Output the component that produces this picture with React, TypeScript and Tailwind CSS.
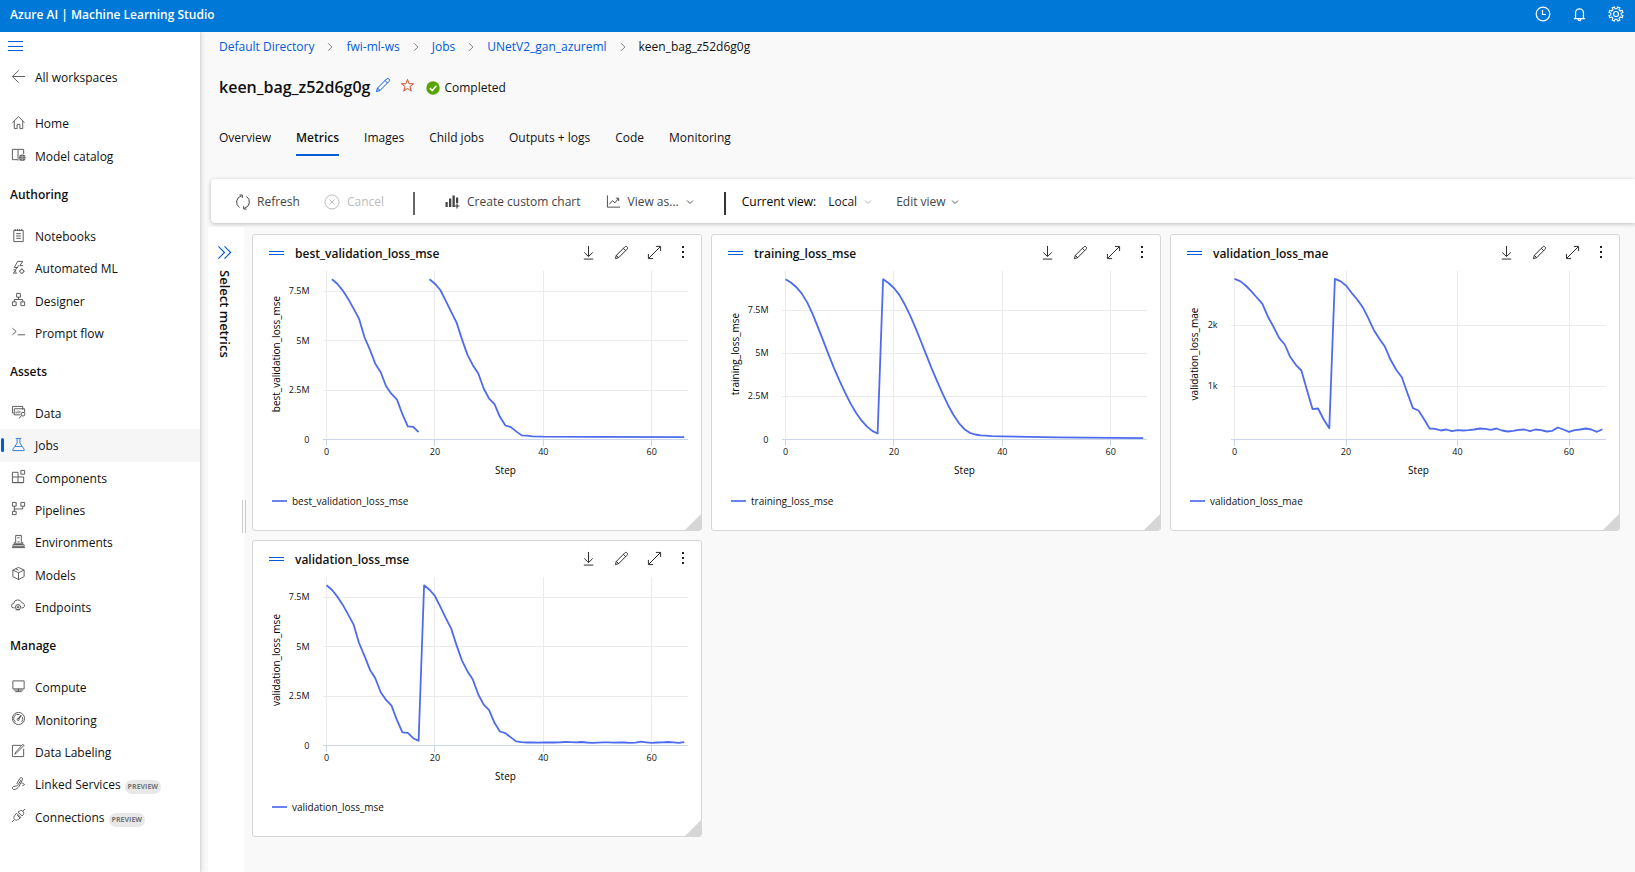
import { Fragment, type ReactNode } from "react";

/* ---------- Icons ---------- */

function Icon({ children, className = "size-4" }: { children: ReactNode; className?: string }) {
  return (
    <svg
      viewBox="0 0 16 16"
      fill="none"
      stroke="currentColor"
      strokeWidth="1"
      aria-hidden="true"
      className={`shrink-0 ${className}`}
    >
      {children}
    </svg>
  );
}

const icons: Record<string, ReactNode> = {
  back: <path d="M15 8H1.5M8 1.5 1.5 8 8 14.5" />,
  home: <path d="M1.5 8.2 8 1.8l6.5 6.4M3.5 6.5v8h3v-4.500h3v4.500h3v-8" />,
  catalog: (
    <>
      <path d="M7.500 14.500v-12H1.500v11h5.500M7.500 2.500h6v5" />
      <circle cx="12" cy="11.500" r="3.500" fill="currentColor" stroke="none" />
      <path d="M8.500 10.500h7M8.500 12.600h7M12 8v7" stroke="#fff" strokeWidth=".5" />
    </>
  ),
  notebook: (
    <>
      <path d="M3 2.500h10v12H3zM5.500 6h5M5.500 8.500h5M5.500 11h5" />
      <path d="M4.500 1v2M7 1v2M9 1v2M11.500 1v2" />
    </>
  ),
  automl: (
    <>
      <path d="M7 1.500h5.500L9.500 6H13M7 1.500 3.500 8h3.800M8.500 5.500 5 10" />
      <path d="M2.500 10.500h3l-3 3.500h4M3.500 12l2 1" />
      <circle cx="11.500" cy="12" r="2" />
      <path d="M11.500 9v1M11.500 14v1M8.500 12h1M13.500 12h1" />
    </>
  ),
  designer: (
    <path d="M6 1.500h4v4H6zM1.500 10.500h4v4h-4zM10.500 10.500h4v4h-4zM8 5.500V8M3.500 10.500V8h9v2.500" />
  ),
  prompt: <path d="M1.500 4.500 5.500 8l-4 3.500M7 11.500h8" />,
  data: (
    <>
      <path d="M12.500 5V1.500h-11v7H3M3.500 4h11v4M3.500 4v6.500H10M5.500 9V7M7.500 9V6M9.500 8.500V6.500" />
      <circle cx="12.800" cy="9.800" r="2" />
      <path d="m11.300 11.300-3 3.200" />
    </>
  ),
  jobs: <path d="M5 1.500h6M6.500 1.500v5L2 13v1.500h12V13L9.500 6.500v-5M4.300 10h7.400" />,
  components: (
    <path d="M1.500 3.500h6v11h-6zM1.500 8.500h12v6h-12M7.500 14.500h6M10.500 1.500h4v4h-4z" />
  ),
  pipelines: (
    <path d="M1.500 1.500h4v4h-4zM10.500 1.500h4v4h-4zM1.500 11h4v3.500h-4zM3.500 5.500V11M3.500 8.500h9v-3" />
  ),
  environments: (
    <path d="M5 1.500h6v9H5zM6.800 4h2.400M6.800 8.500h2.400M3.500 8.500v2.800h9V8.500M2 11.500h12v2H2zM1 14.500h14" />
  ),
  models: <path d="M8 1.500 14 4.300v7L8 14.500l-6-3.200v-7zM2 4.300l6 2.900 6-2.900M8 7.200v7.300M5 2.900l3 1.600" />,
  endpoints: (
    <>
      <path d="M4 10.500H2.800a2.300 2.300 0 0 1 0-4.600A4.500 4.500 0 0 1 11.500 5a3 3 0 0 1 1.500 5.500" />
      <circle cx="7.500" cy="9.800" r="2.800" />
      <path d="M5 12.500h4.500M7.500 8v3M6 9.800h3M13 10.500h-2" />
    </>
  ),
  compute: <path d="M2 2h12v8.500H2zM8 10.500V13M4.500 13.500h7M3 11.800h10" />,
  monitoring: (
    <>
      <circle cx="8" cy="8" r="6.500" />
      <path d="M4.500 11.500A4.500 4.500 0 0 1 9 3.800M12 6.500a4.600 4.600 0 0 1-.5 5" />
      <path d="M11 4.500 7.800 8.500" strokeWidth="1.500" />
      <circle cx="7.600" cy="9" r="1.100" />
    </>
  ),
  labeling: <path d="M13.500 6v8.500h-12v-12h9.500M14 2.500l-8 8-2 1.500 1.200-2.500L12.500 1.500z" />,
  linked: (
    <path d="M6 8.500 9.500 2.500c1-1.500 3.500-.5 2.800 1.300L8.500 11c-1 1.800-3.200 3.500-5.300 3.500-2.200 0-2.400-3 0-3.500 2-.5 3.300.3 4.300-1.500L10.800 4M11 7.500c1.500-.5 2.500 1 3.500 1.500M12 10.500l2.500-1.500" />
  ),
  connections: (
    <path d="m1 15 2.500-2.500M15 1l-2.500 2.500M6 5.500 3.800 8.200c-1 1.200-1 3 0 4s2.800 1 4 0L10.500 10zM7.500 4.200 10 2.800c1.200-.5 2.400.2 2.900.9s1 2 .3 3.100L11.800 8.500zM6.500 7.500l3 3" />
  ),
  pencil: (
    <path d="M1.500 14.500 2.500 11 11.500 2c.8-.8 1.800-.6 2.400 0s.8 1.600 0 2.500L5 13.500zM10 3.500 12.500 6M2.500 11 5 13.500" />
  ),
  star: <path d="m8 1.500 1.700 4.600h4.800l-3.900 3 1.500 4.900L8 11.100 3.900 14l1.500-4.900-3.900-3h4.800z" />,
  refresh: (
    <>
      <path d="M6.500 1.800A6.500 6.500 0 0 0 4.500 13.500M9.500 14.200A6.500 6.500 0 0 0 11.500 2.500" />
      <path d="M4.500 1h2.800v2.800M11.500 15H8.700v-2.800" />
    </>
  ),
  cancel: (
    <>
      <circle cx="8" cy="8" r="7" />
      <path d="m5.500 5.500 5 5M10.500 5.500l-5 5" />
    </>
  ),
  customChart: (
    <>
      <path
        d="M1.500 8h2.200v5H1.500zM5 4.500h2.300V13H5zM8.500 1.500h2.300V13H8.500zM12 3.500h2.200V9H12z"
        fill="currentColor"
        stroke="none"
      />
      <path d="M13 9.500v5M10.500 12h5" strokeWidth="1.200" />
    </>
  ),
  lineChart: <path d="M1.500 1.500v12.500H15M3.500 11l3.500-4 2.500 2.500L13.500 4.500M10.500 4.500h3v3" />,
  download: <path d="M8 1v11M3.500 8 8 12.300 12.500 8M3 15h10" />,
  expand: <path d="m2 14 12-12M9.500 1.500h5v5M1.500 9.500v5h5" />,
  chevronRight: <path d="m5 2 6 6-6 6" strokeWidth="1.500" />,
  chevronDown: <path d="m2 5 6 6 6-6" strokeWidth="1.800" />,
  doubleChevron: <path d="m1.500 1.500 6.500 6.500-6.500 6.500M8 1.500 14.500 8 8 14.500" strokeWidth="1.200" />,
  clock: (
    <>
      <circle cx="8" cy="8" r="6.800" strokeWidth="1.200" />
      <path d="M7.500 4v4.500h3.500" strokeWidth="1.200" />
    </>
  ),
  bell: (
    <path
      d="M2 12.500h12M3.800 12.500V6.200a4.200 4.200 0 0 1 8.400 0v6.300M6.500 13a1.500 1.500 0 0 0 3 0"
      strokeWidth="1.300"
    />
  ),
  gear: (
    <>
      <circle cx="8" cy="8" r="2.500" strokeWidth="1.200" />
      <path
        d="M6.400 1 7.100 2.800h1.800L9.600 1l2.200.9-.8 1.800L12.300 5l1.800-.8.9 2.200-1.800.7v1.800l1.800.7-.9 2.200-1.800-.8-1.300 1.300.8 1.800-2.200.9-.7-1.800H7.100L6.400 15l-2.200-.9.8-1.800L3.700 11l-1.800.8L1 9.600l1.800-.7V7.100L1 6.400l.9-2.200 1.800.8L5 3.700l-.8-1.800z"
        strokeWidth="1.100"
      />
    </>
  ),
};

/* ---------- Sidebar ---------- */

type NavItem = { label: string; icon: string; active?: boolean; preview?: boolean };

const topItems: NavItem[] = [
  { label: "Home", icon: "home" },
  { label: "Model catalog", icon: "catalog" },
];
const authoring: NavItem[] = [
  { label: "Notebooks", icon: "notebook" },
  { label: "Automated ML", icon: "automl" },
  { label: "Designer", icon: "designer" },
  { label: "Prompt flow", icon: "prompt" },
];
const assets: NavItem[] = [
  { label: "Data", icon: "data" },
  { label: "Jobs", icon: "jobs", active: true },
  { label: "Components", icon: "components" },
  { label: "Pipelines", icon: "pipelines" },
  { label: "Environments", icon: "environments" },
  { label: "Models", icon: "models" },
  { label: "Endpoints", icon: "endpoints" },
];
const manage: NavItem[] = [
  { label: "Compute", icon: "compute" },
  { label: "Monitoring", icon: "monitoring" },
  { label: "Data Labeling", icon: "labeling" },
  { label: "Linked Services", icon: "linked", preview: true },
  { label: "Connections", icon: "connections", preview: true },
];

function NavList({ items, className }: { items: NavItem[]; className: string }) {
  return (
    <ul className={`grid auto-rows-fr ${className}`}>
      {items.map((item) => (
        <li key={item.label} className="flex">
          <a
            href="#"
            aria-current={item.active ? "page" : undefined}
            className={`relative flex flex-1 items-center pl-[11px] ${item.active ? "bg-[#f6f6f6]" : ""}`}
          >
            {item.active && <span className="absolute left-px h-3.5 w-[3px] rounded-sm bg-[#015cda]" />}
            <Icon className={`mb-0.5 size-[15px] ${item.active ? "text-[#2b7cd3]" : "text-[#555]"}`}>
              {icons[item.icon]}
            </Icon>
            <span className={`ml-[9px] pt-0.5 ${item.active ? "font-medium" : ""}`}>{item.label}</span>
            {item.preview && (
              <span className="mt-1.5 ml-1 rounded-full bg-[#e8e8e8] px-[3px] text-[7px] leading-[14px] font-bold text-[#777]">
                PREVIEW
              </span>
            )}
          </a>
        </li>
      ))}
    </ul>
  );
}

function NavHeading({ children }: { children: ReactNode }) {
  return <h2 className="flex h-12 items-center pb-0.5 pl-[10px] font-semibold">{children}</h2>;
}

function Sidebar() {
  return (
    <nav className="z-10 w-[201px] shrink-0 border-r border-[#dcdcdc] bg-white shadow-[1px_0_4px_rgba(0,0,0,0.12)]">
      <button type="button" aria-label="Toggle navigation" className="flex h-7 items-center pl-2">
        <span className="flex h-[10px] w-[15px] flex-col justify-between border-y border-[#015cda]">
          <span className="m-auto h-px w-full bg-[#015cda]" />
        </span>
      </button>
      <a href="#" className="mt-0.5 mb-[13px] flex h-8 items-center pl-[11px]">
        <Icon className="mb-1 size-[15px] text-[#555]">{icons.back}</Icon>
        <span className="ml-[9px]">All workspaces</span>
      </a>
      <NavList items={topItems} className="h-[65px]" />
      <NavHeading>Authoring</NavHeading>
      <NavList items={authoring} className="h-[129px]" />
      <NavHeading>Assets</NavHeading>
      <NavList items={assets} className="h-[226px]" />
      <NavHeading>Manage</NavHeading>
      <NavList items={manage} className="h-[162px]" />
    </nav>
  );
}

/* ---------- Charts ---------- */

type Point = [number, number];
type ChartSpec = {
  name: string;
  segments: Point[][];
  x0: number;
  xStep: number;
  yTicks: { label: string; value: number }[];
  yScale: number;
  yMin: number;
};

const series = (start: number, values: number[]): Point[] => values.map((v, i) => [start + i, v]);

const firstRun = [
  8.11, 7.89, 7.54, 7.12, 6.63, 6.12, 5.19, 4.55, 3.84, 3.41, 2.7, 2.31, 2.02, 1.28, 0.67, 0.64, 0.37,
];
const secondRun = [
  8.11, 7.89, 7.57, 7.03, 6.46, 5.92, 5.07, 4.3, 3.76, 3.34, 2.58, 2.07, 1.79, 1.15, 0.71, 0.63, 0.41, 0.21,
];
const maeTail = [
  0.306, 0.279, 0.295, 0.268, 0.284, 0.279, 0.284, 0.295, 0.311, 0.306, 0.29, 0.311, 0.279, 0.262, 0.273, 0.29,
  0.295, 0.268, 0.295, 0.284, 0.262, 0.273, 0.328, 0.295, 0.257, 0.284, 0.295, 0.311, 0.295, 0.257, 0.3,
];
const mae = [
  2.765, 2.727, 2.656, 2.563, 2.459, 2.355, 2.142, 1.978, 1.798, 1.689, 1.481, 1.355, 1.262, 0.94, 0.628, 0.639,
  0.459, 0.317, 2.765, 2.727, 2.656, 2.536, 2.426, 2.3, 2.12, 1.923, 1.78, 1.65, 1.437, 1.273, 1.153, 0.896,
  0.645, 0.607, 0.464, 0.311, ...maeTail,
];
const training = [
  9.29, 9.1, 8.83, 8.46, 7.95, 7.28, 6.5, 5.7, 4.88, 4.1, 3.38, 2.72, 2.09, 1.55, 1.11, 0.76, 0.5, 0.35, 9.29,
  9.07, 8.78, 8.38, 7.84, 7.18, 6.45, 5.68, 4.89, 4.1, 3.35, 2.65, 1.99, 1.42, 0.95, 0.6, 0.39, 0.29, 0.24,
  0.22, 0.2,
];

const millions = [
  { label: "0", value: 0 },
  { label: "2.5M", value: 2.5 },
  { label: "5M", value: 5 },
  { label: "7.5M", value: 7.5 },
];

const charts: ChartSpec[] = [
  {
    name: "best_validation_loss_mse",
    segments: [
      series(1, firstRun),
      [...series(19, secondRun), [37, 0.2], [38, 0.16], [40, 0.14], [50, 0.13], [66, 0.12]],
    ],
    x0: 73.5,
    xStep: 5.42,
    yTicks: millions,
    yScale: 19.75,
    yMin: 0,
  },
  {
    name: "training_loss_mse",
    segments: [[...series(0, training), [40, 0.18], [45, 0.15], [50, 0.13], [66, 0.08]]],
    x0: 73.5,
    xStep: 5.42,
    yTicks: millions,
    yScale: 17.25,
    yMin: 0,
  },
  {
    name: "validation_loss_mae",
    segments: [series(0, mae)],
    x0: 63.5,
    xStep: 5.575,
    yTicks: [
      { label: "1k", value: 1 },
      { label: "2k", value: 2 },
    ],
    yScale: 61,
    yMin: 0.131,
  },
  {
    name: "validation_loss_mse",
    segments: [
      [
        ...series(0, firstRun),
        [17, 0.24],
        ...series(18, secondRun),
        ...series(36, maeTail.map((v) => 0.13 + (v - 0.257) * 0.9)),
      ],
    ],
    x0: 73.5,
    xStep: 5.42,
    yTicks: millions,
    yScale: 19.75,
    yMin: 0,
  },
];

const BASELINE = 170.5;
const RIGHT = 435;

function LineChart({ spec }: { spec: ChartSpec }) {
  const px = (step: number) => spec.x0 + step * spec.xStep;
  const py = (value: number) => BASELINE - (value - spec.yMin) * spec.yScale;
  const snap = (n: number) => Math.floor(n) + 0.5;
  const left = spec.x0 - 3.5;
  return (
    <svg viewBox="0 0 448 216" role="img" aria-label={`${spec.name} by step`} className="block w-full">
      <g stroke="#ebebeb" shapeRendering="crispEdges">
        {[0, 20, 40, 60].map((s) => (
          <path key={s} d={`M${snap(px(s))} 2V170`} />
        ))}
        {spec.yTicks
          .filter((t) => t.value > 0)
          .map((t) => (
            <path key={t.label} d={`M${left} ${snap(py(t.value))}H${RIGHT}`} />
          ))}
      </g>
      <g stroke="#ccd6eb" shapeRendering="crispEdges">
        <path d={`M${left} ${BASELINE}H${RIGHT}`} />
        {[0, 20, 40, 60].map((s) => (
          <path key={s} d={`M${snap(px(s))} 170v7`} />
        ))}
      </g>
      {spec.segments.map((points, i) => (
        <polyline
          key={i}
          points={points.map(([s, v]) => `${px(s).toFixed(1)},${py(v).toFixed(1)}`).join(" ")}
          fill="none"
          stroke="#4f6bed"
          strokeWidth="1.800"
          strokeLinejoin="round"
        />
      ))}
      <g fontSize="9" fill="#111">
        {spec.yTicks.map((t) => (
          <text key={t.label} x={spec.x0 - 17} y={py(t.value) + 3} textAnchor="end">
            {t.label}
          </text>
        ))}
        {[0, 20, 40, 60].map((s) => (
          <text key={s} x={px(s)} y="186" textAnchor="middle">
            {s}
          </text>
        ))}
      </g>
      <g fontSize="10" fill="#000" textAnchor="middle">
        <text x={(left + RIGHT) / 2} y="205">
          Step
        </text>
        <text transform="translate(27 85) rotate(-90)">{spec.name}</text>
      </g>
    </svg>
  );
}

function ChartCard({ spec }: { spec: ChartSpec }) {
  return (
    <article className="relative flex flex-col overflow-hidden rounded-[3px] border border-[#d6d6d6] bg-white pb-[13px]">
      <header className="flex h-[34px] items-center pt-0.5 pr-[15px] pl-4">
        <span className="mr-[11px] h-1 w-[15px] border-y border-[#015cda]" />
        <h3 className="mr-auto pt-0.5 font-semibold">{spec.name}</h3>
        <div className="mb-0.5 flex items-center gap-[18px] text-[#222]">
          <button type="button" aria-label="Download">
            <Icon className="size-[15px]">{icons.download}</Icon>
          </button>
          <button type="button" aria-label="Edit">
            <Icon className="size-[15px]">{icons.pencil}</Icon>
          </button>
          <button type="button" aria-label="Expand">
            <Icon className="size-[15px]">{icons.expand}</Icon>
          </button>
          <button type="button" aria-label="More options">
            <svg viewBox="0 0 4 14" className="h-3.5 w-1.5" fill="currentColor" aria-hidden="true">
              <path d="M1 1h2v2H1zM1 6h2v2H1zM1 11h2v2H1z" />
            </svg>
          </button>
        </div>
      </header>
      <LineChart spec={spec} />
      <div className="flex h-8 items-center gap-[5px] pl-[19px] text-[10px]">
        <span className="h-0.5 w-[15px] bg-[#6a82f0]" />
        {spec.name}
      </div>
      <span className="absolute right-0 bottom-0 size-4 bg-[#d6d6d6] [clip-path:polygon(100%_0,100%_100%,0_100%)]" />
    </article>
  );
}

/* ---------- Page ---------- */

const crumbs = ["Default Directory", "fwi-ml-ws", "Jobs", "UNetV2_gan_azureml"];
const tabs = ["Overview", "Metrics", "Images", "Child jobs", "Outputs + logs", "Code", "Monitoring"];

function Toolbar() {
  return (
    <div className="ml-[10px] flex h-11 items-center rounded-l-[4px] bg-white pt-px pl-6 text-[#444] shadow-[0_1px_4px_rgba(0,0,0,0.25)]">
      <button type="button" className="flex items-center gap-1.5 font-medium">
        <Icon>{icons.refresh}</Icon>
        Refresh
      </button>
      <button type="button" disabled className="ml-6 flex items-center gap-[7px] font-medium text-[#bbb]">
        <Icon>{icons.cancel}</Icon>
        Cancel
      </button>
      <span className="mt-1 ml-[29px] h-[23px] w-0.5 bg-[#666]" />
      <button type="button" className="ml-[29px] flex items-center gap-[7px] font-medium">
        <Icon>{icons.customChart}</Icon>
        Create custom chart
      </button>
      <button type="button" className="ml-[25px] flex items-center gap-[7px] font-medium">
        <Icon className="size-[15px]">{icons.lineChart}</Icon>
        View as...
        <Icon className="size-2">{icons.chevronDown}</Icon>
      </button>
      <span className="mt-1 ml-[30px] h-[23px] w-0.5 bg-[#333]" />
      <label htmlFor="view" className="ml-4 text-black">
        Current view:
      </label>
      <span className="ml-3 flex items-center text-[#222]">
        <select id="view" defaultValue="Local" className="w-9 appearance-none bg-transparent">
          <option>Local</option>
        </select>
        <Icon className="size-2 text-[#aaa]">{icons.chevronDown}</Icon>
      </span>
      <button type="button" className="ml-6 flex items-center gap-[5px] font-medium">
        Edit view
        <Icon className="size-2">{icons.chevronDown}</Icon>
      </button>
    </div>
  );
}

export default function App() {
  return (
    <div className="flex min-h-screen flex-col bg-[#f9f9f9] font-['Open_Sans','Noto_Sans',sans-serif] text-[12px] leading-4 text-[#111]">
      <header className="z-20 flex h-8 items-center bg-[#0078d7] pr-[11px] pl-[10px] text-white">
        <h1 className="mr-auto pb-0.5 font-semibold">Azure AI | Machine Learning Studio</h1>
        <div className="flex items-center gap-[21px] pb-1">
          <button type="button" aria-label="Recent activity">
            <Icon>{icons.clock}</Icon>
          </button>
          <button type="button" aria-label="Notifications">
            <Icon className="size-[15px]">{icons.bell}</Icon>
          </button>
          <button type="button" aria-label="Settings">
            <Icon>{icons.gear}</Icon>
          </button>
        </div>
      </header>
      <div className="flex flex-1">
        <Sidebar />
        <main className="flex min-w-0 flex-1 flex-col">
          <nav aria-label="Breadcrumb" className="flex h-7 items-center pt-0.5 pl-[18px]">
            {crumbs.map((crumb) => (
              <Fragment key={crumb}>
                <a href="#" className="text-[#015cda]">
                  {crumb}
                </a>
                <Icon className="mx-[11px] size-[10px] text-[#777]">{icons.chevronRight}</Icon>
              </Fragment>
            ))}
            <span>keen_bag_z52d6g0g</span>
          </nav>
          <div className="flex h-14 items-center pl-[18px]">
            <h2 className="pb-0.5 text-[16px] font-semibold">keen_bag_z52d6g0g</h2>
            <button type="button" aria-label="Rename" className="mb-1.5 ml-[5px] text-[#015cda]">
              <Icon>{icons.pencil}</Icon>
            </button>
            <button type="button" aria-label="Favorite" className="mb-1.5 ml-[9px] text-[#d14324]">
              <Icon className="size-[15px]">{icons.star}</Icon>
            </button>
            <svg viewBox="0 0 14 14" className="ml-[11px] size-3.5" aria-hidden="true">
              <circle cx="7" cy="7" r="6.700" fill="#57a300" />
              <path d="m3.800 7.200 2.400 2.300 4.200-4.700" fill="none" stroke="#fff" strokeWidth="1.600" />
            </svg>
            <span className="ml-1">Completed</span>
          </div>
          <div role="tablist" className="flex h-10 gap-[25px] pl-[18px]">
            {tabs.map((tab) => (
              <button
                key={tab}
                type="button"
                role="tab"
                aria-selected={tab === "Metrics"}
                className={`h-10 border-b-2 pt-1.5 ${
                  tab === "Metrics" ? "border-[#015cda] font-semibold" : "border-transparent"
                }`}
              >
                {tab}
              </button>
            ))}
          </div>
          <div className="mt-[23px]">
            <Toolbar />
          </div>
          <div className="mt-1 flex flex-1 pl-[7px]">
            <aside className="flex w-9 shrink-0 flex-col items-center bg-white pt-[18px] pr-[3px]">
              <button type="button" aria-label="Expand panel" className="text-[#015cda]">
                <Icon className="size-[15px]">{icons.doubleChevron}</Icon>
              </button>
              <h2 className="mt-2.5 text-[13px] font-semibold [writing-mode:vertical-rl]">Select metrics</h2>
              <span className="mt-[142px] -mr-[5px] h-[33px] w-1 self-end border-x border-[#ccc]" />
            </aside>
            <section className="grid flex-1 grid-cols-3 content-start gap-[9px] pt-[7px] pr-[15px] pl-2">
              {charts.map((spec) => (
                <ChartCard key={spec.name} spec={spec} />
              ))}
            </section>
          </div>
        </main>
      </div>
    </div>
  );
}
